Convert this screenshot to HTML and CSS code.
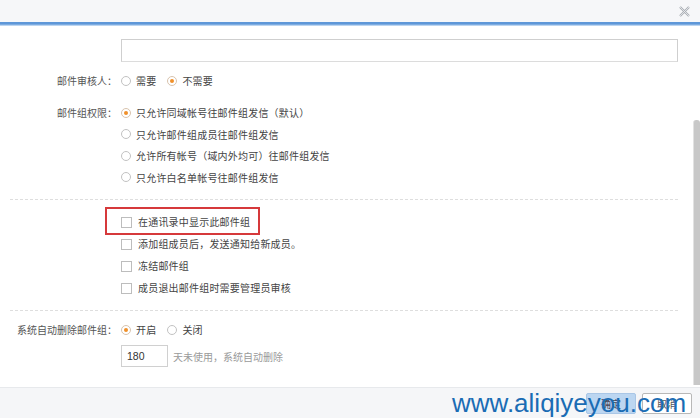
FILE: index.html
```html
<!DOCTYPE html>
<html lang="zh-CN">
<head>
  <meta charset="UTF-8">
  <title>邮件组设置</title>
  <link rel="stylesheet" href="styles.css">
</head>
<body>
<div class="dialog">
  <div class="titlebar">
    <svg class="close" width="11" height="11" viewBox="0 0 11 11">
      <path d="M1 1 L10 10 M10 1 L1 10" stroke="#a9adb3" stroke-width="2.2" fill="none"/>
      <path d="M1 1 L10 10 M10 1 L1 10" stroke="#eef0f2" stroke-width="0.8" fill="none"/>
    </svg>
  </div>
  <div class="titleline"></div>

  <div class="main">
    <div class="form">
      <div class="field">
        <div class="label"></div>
        <div class="textbox"></div>
      </div>

      <div class="field review">
        <div class="label">邮件审核人：</div>
        <div class="options inline">
          <span class="opt"><i class="radio"></i>需要</span>
          <span class="opt"><i class="radio on"></i>不需要</span>
        </div>
      </div>

      <div class="field perm">
        <div class="label">邮件组权限：</div>
        <div class="options">
          <span class="opt"><i class="radio on"></i>只允许同域帐号往邮件组发信（默认）</span>
          <span class="opt"><i class="radio"></i>只允许邮件组成员往邮件组发信</span>
          <span class="opt"><i class="radio"></i>允许所有帐号（域内外均可）往邮件组发信</span>
          <span class="opt"><i class="radio"></i>只允许白名单帐号往邮件组发信</span>
        </div>
      </div>

      <div class="sep"></div>

      <div class="field checks">
        <div class="label"></div>
        <div class="options">
          <span class="opt marked"><i class="check"></i>在通讯录中显示此邮件组</span>
          <span class="opt"><i class="check"></i>添加组成员后，发送通知给新成员。</span>
          <span class="opt"><i class="check"></i>冻结邮件组</span>
          <span class="opt"><i class="check"></i>成员退出邮件组时需要管理员审核</span>
        </div>
      </div>

      <div class="sep second"></div>

      <div class="field autodel">
        <div class="label">系统自动删除邮件组：</div>
        <div class="options inline">
          <span class="opt"><i class="radio on"></i>开启</span>
          <span class="opt"><i class="radio"></i>关闭</span>
        </div>
      </div>
      <div class="field days">
        <div class="label"></div>
        <div class="daybox">180</div>
        <span class="hint">天未使用，系统自动删除</span>
      </div>
    </div>
    <div class="scrollbar"></div>
  </div>

  <div class="footer">
    <span class="btn ok">确定</span>
    <span class="btn cancel">取消</span>
    <div class="watermark">www.aliqiyeyou.com</div>
  </div>
</div>
</body>
</html>
```

FILE: styles.css
```css
body {
  margin: 0;
  font-family: "Noto Sans CJK SC", sans-serif;
  font-size: 10px;
  color: #444;
  background: #ffffff;
}
.dialog {
  width: 700px;
  height: 418px;
  display: flex;
  flex-direction: column;
  overflow: hidden;
}
.titlebar {
  height: 22px;
  background: #f6f7f9;
  display: flex;
  justify-content: flex-end;
  align-items: center;
  padding-right: 10px;
}
.titleline {
  height: 4px;
  background: linear-gradient(#5e97d8 0, #5e97d8 2px, #9cc1ea 3px, #dbe8f6 4px);
}
.main {
  flex: 1;
  display: flex;
  min-height: 0;
}
.form {
  flex: 1;
  padding: 13px 15px 0 0;
}
.scrollbar {
  width: 6px;
  margin-top: 94px;
  margin-bottom: 2px;
  background: #c8c8c8;
  border-left: 1px solid #e2e2e2;
  border-radius: 3px 3px 0 0;
}
.field {
  display: flex;
  align-items: flex-start;
}
.label {
  width: 117px;
  flex-shrink: 0;
  text-align: right;
  margin-right: 4px;
  line-height: 20px;
  color: #555;
}
.textbox {
  flex: 1;
  height: 21px;
  border: 1px solid #cfcfcf;
  border-bottom-color: #dcdcdc;
}
.options {
  display: flex;
  flex-direction: column;
}
.options.inline {
  flex-direction: row;
  gap: 11px;
}
.opt {
  display: flex;
  align-items: center;
  position: relative;
  white-space: nowrap;
  letter-spacing: 0.2px;
}
.review .opt, .autodel .opt {
  line-height: 20px;
}
.review {
  margin-top: 9px;
}
.perm {
  margin-top: 11px;
}
.perm .label {
  line-height: 21.5px;
}
.perm .opt {
  line-height: 21.5px;
}
.radio {
  width: 8px;
  height: 8px;
  border: 1px solid #c2c2c2;
  border-radius: 50%;
  margin-right: 5px;
  position: relative;
  background: #fff;
}
.radio.on {
  border-color: #d8c3ad;
}
.radio.on::after {
  content: "";
  position: absolute;
  left: 2px;
  top: 2px;
  width: 4px;
  height: 4px;
  border-radius: 50%;
  background: #f0902a;
}
.check {
  width: 9px;
  height: 9px;
  border: 1px solid #bdbdbd;
  margin-right: 6px;
  background: #fff;
}
.sep {
  margin: 11px 0 0 10px;
  border-top: 1px dashed #dedede;
}
.checks {
  margin-top: 11px;
}
.checks .opt {
  line-height: 22px;
}
/* 标注框 */
.marked::after {
  content: "";
  position: absolute;
  left: -16px;
  top: -4px;
  width: 155px;
  height: 28px;
  box-sizing: border-box;
  border: 2px solid #d6393b;
}
.autodel {
  margin-top: 9px;
}
.days {
  margin-top: 5px;
  align-items: center;
}
.daybox {
  width: 40px;
  height: 20px;
  line-height: 20px;
  border: 1px solid #d0d0d0;
  padding-left: 5px;
  font-family: "Liberation Sans", Arial, sans-serif;
  font-size: 10.5px;
  color: #333;
}
.hint {
  margin-left: 5px;
  color: #9a9a9a;
}
.footer {
  height: 30px;
  border-top: 1px solid #e7e9ec;
  background: #f5f6f8;
  display: flex;
  justify-content: flex-end;
  align-items: center;
  gap: 6px;
  padding-right: 8px;
  position: relative;
}
.btn {
  width: 48px;
  height: 19px;
  line-height: 19px;
  text-align: center;
  border: 1px solid #b8b8b8;
  border-radius: 2px;
  color: #555;
  background: #fff;
}
.btn.ok {
  background: #bcd6f1;
  border-color: #a9c6e6;
  color: #445;
}
/* 水印 */
.watermark {
  position: absolute;
  left: 452px;
  top: 2px;
  font-family: "Liberation Sans", Arial, sans-serif;
  font-size: 26px;
  line-height: 26px;
  color: #1a6cb4;
  white-space: nowrap;
}
```
